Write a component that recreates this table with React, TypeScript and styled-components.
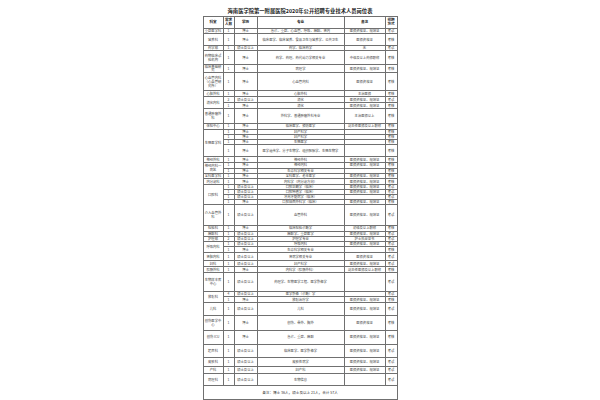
import styled, { createGlobalStyle } from "styled-components";

type Sub = {
     n: string;
     edu: string;
     major: string;
     note: string;
     method: string;
     h: number;
};

type Group = {
     dept: string;
     subs: Sub[];
};

const GlobalStyle = createGlobalStyle`
     html, body {
          margin: 0;
          padding: 0;
          background: #ffffff;
     }
     body {
          font-family: "Noto Sans CJK SC", "Noto Sans", sans-serif;
          color: #222;
     }
`;

const Page = styled.div`
     width: 600px;
     height: 400px;
     display: flex;
     flex-direction: column;
     align-items: center;
     padding-top: 7px;
     box-sizing: border-box;
     overflow: hidden;
`;

const Title = styled.h1`
     margin: 0;
     height: 8.5px;
     font-size: 5.3px;
     line-height: 8.5px;
     font-weight: 700;
     color: #222;
     white-space: nowrap;
`;

const Table = styled.table`
     width: 194px;
     border-collapse: collapse;
     table-layout: fixed;
     font-size: 3.3px;
     line-height: 1.12;
`;

const Row = styled.tr<{ $h: number }>`
     height: ${(p) => p.$h}px;
`;

const Cell = styled.td`
     border: 1px solid #707070;
     padding: 0 0.4px;
     text-align: center;
     vertical-align: middle;
     color: #444;
     overflow: hidden;
     word-break: break-all;
`;

const HeadCell = styled.th`
     border: 1px solid #707070;
     padding: 0;
     font-size: 3.6px;
     line-height: 1.15;
     font-weight: 700;
     color: #222;
     vertical-align: middle;
`;

const FootCell = styled.td`
     border: 1px solid #707070;
     text-align: center;
     vertical-align: middle;
     font-size: 3.6px;
     color: #333;
`;

const groups: Group[] = [
     { dept: "重症医学科", subs: [{ n: "1", edu: "博士", major: "急诊、重症、心血管、呼吸、麻醉、肾内", note: "医师资格证、规培证", method: "考试", h: 5.7 }] },
     { dept: "营养科", subs: [{ n: "1", edu: "博士", major: "临床医学、临床营养、食品卫生与营养学、公共卫生", note: "医师资格证", method: "考核", h: 11.5 }] },
     { dept: "药学部", subs: [{ n: "1", edu: "硕士及以上", major: "药学、临床药学", note: "无", method: "考试", h: 5.7 }] },
     { dept: "药物临床试验机构", subs: [{ n: "1", edu: "博士", major: "药学、药理、药代动力学相关专业", note: "中级及以上药师职称", method: "考核", h: 13.3 }] },
     { dept: "临床基础研究", subs: [{ n: "1", edu: "博士", major: "病理学", note: "医师资格证、规培证", method: "考核", h: 5 }] },
     { dept: "心血管内科（心血管研究所）", subs: [{ n: "1", edu: "博士", major: "心血管内科", note: "医师资格证", method: "考核", h: 18.3 }] },
     { dept: "心脏外科", subs: [{ n: "1", edu: "博士", major: "心脏外科", note: "主治医师", method: "考核", h: 6 }] },
     {
          dept: "消化内科",
          subs: [
               { n: "2", edu: "硕士及以上", major: "消化", note: "医师资格证、规培证", method: "考试", h: 5.7 },
               { n: "1", edu: "博士", major: "消化", note: "医师资格证、规培证", method: "考核", h: 6 },
          ],
     },
     { dept: "普通肿瘤外科", subs: [{ n: "1", edu: "博士", major: "外科学、普通肿瘤外科专业", note: "主治医师以上", method: "考核", h: 14.6 }] },
     { dept: "体检中心", subs: [{ n: "1", edu: "博士", major: "临床医学、预防医学", note: "副主任医师及以上职称", method: "考核", h: 6 }] },
     {
          dept: "生殖医学科",
          subs: [
               { n: "1", edu: "博士", major: "妇产科学", note: "", method: "考核", h: 5.2 },
               { n: "1", edu: "博士", major: "妇产科学", note: "", method: "考核", h: 5 },
               { n: "1", edu: "博士", major: "生殖医学", note: "", method: "考核", h: 5.5 },
               { n: "1", edu: "博士", major: "医学遗传学、分子生物学、组织胚胎学、生殖生物学", note: "", method: "考核", h: 12 },
          ],
     },
     { dept: "神经外科", subs: [{ n: "1", edu: "博士", major: "神经外科", note: "医师资格证、规培证", method: "考核", h: 5.7 }] },
     {
          dept: "神经内科一病区",
          subs: [
               { n: "1", edu: "博士", major: "神经内科", note: "医师资格证、规培证", method: "考核", h: 5.5 },
               { n: "1", edu: "博士", major: "生命科学相关专业", note: "", method: "考核", h: 5.5 },
          ],
     },
     { dept: "全科医学科", subs: [{ n: "1", edu: "博士", major: "全科医学、老年医学", note: "医师资格证、规培证", method: "考核", h: 5.3 }] },
     { dept: "内分泌科", subs: [{ n: "1", edu: "博士", major: "内科学（内分泌方向）", note: "医师资格证、规培证", method: "考核", h: 5.5 }] },
     {
          dept: "口腔科",
          subs: [
               { n: "1", edu: "硕士及以上", major: "口腔正畸学（临床）", note: "医师资格证、规培证", method: "考试", h: 5.1 },
               { n: "1", edu: "硕士及以上", major: "口腔种植学（临床）", note: "医师资格证、规培证", method: "考试", h: 5.1 },
               { n: "1", edu: "硕士及以上", major: "牙周牙髓病学（临床）", note: "", method: "考试", h: 5.1 },
               { n: "1", edu: "博士", major: "口腔颌面外科学（临床）", note: "医师资格证、规培证", method: "考核", h: 5.2 },
          ],
     },
     { dept: "介入血管外科", subs: [{ n: "1", edu: "硕士及以上", major: "血管外科", note: "医师资格证、规培证", method: "考试", h: 20.5 }] },
     { dept: "检验科", subs: [{ n: "1", edu: "博士", major: "临床检验诊断学", note: "初级及以上职称", method: "考核", h: 5.8 }] },
     { dept: "麻醉科", subs: [{ n: "1", edu: "硕士及以上", major: "麻醉学、重症医学", note: "医师资格证、规培证", method: "考试", h: 5.7 }] },
     { dept: "护理部", subs: [{ n: "2", edu: "硕士及以上", major: "护理学专业", note: "护士执业证书", method: "考试", h: 5 }] },
     {
          dept: "呼吸内科",
          subs: [
               { n: "1", edu: "硕士及以上", major: "呼吸内科", note: "医师资格证、规培证", method: "考试", h: 5 },
               { n: "1", edu: "博士", major: "生命科学相关专业", note: "", method: "考核", h: 5.7 },
          ],
     },
     { dept: "肾脏内科", subs: [{ n: "1", edu: "硕士及以上", major: "肾病学相关专业", note: "医师资格证", method: "考试", h: 8.3 }] },
     { dept: "妇科", subs: [{ n: "1", edu: "硕士及以上", major: "妇产科学", note: "医师资格证、规培证", method: "考试", h: 6 }] },
     { dept: "肛肠外科", subs: [{ n: "1", edu: "博士", major: "内科学（肛肠外科）", note: "副主任医师及以上职称", method: "考核", h: 5.5 }] },
     { dept: "生物样本库中心", subs: [{ n: "1", edu: "硕士及以上", major: "药理学、生物医学工程、医学影像学", note: "", method: "考试", h: 19.5 }] },
     {
          dept: "放射科",
          subs: [
               { n: "4", edu: "硕士及以上", major: "医学影像（诊断）学", note: "", method: "考试", h: 5 },
               { n: "1", edu: "博士", major: "放射治疗学", note: "医师资格证、规培证", method: "考核", h: 5.7 },
          ],
     },
     { dept: "儿科", subs: [{ n: "1", edu: "硕士及以上", major: "儿科", note: "医师资格证、规培证", method: "考试", h: 12.6 }] },
     { dept: "创伤医学中心", subs: [{ n: "1", edu: "博士", major: "创伤、骨外、胸外", note: "医师资格证", method: "考核", h: 15 }] },
     { dept: "创伤 ICU", subs: [{ n: "1", edu: "博士", major: "急诊、重症、麻醉", note: "医师资格证、规培证", method: "考核", h: 14 }] },
     { dept: "超声科", subs: [{ n: "1", edu: "硕士及以上", major: "临床医学、医学影像学", note: "医师资格证、规培证", method: "考试", h: 13.4 }] },
     { dept: "皮肤科", subs: [{ n: "1", edu: "硕士及以上", major: "皮肤性病学", note: "医师资格证、规培证", method: "考试", h: 9 }] },
     { dept: "产科", subs: [{ n: "1", edu: "硕士及以上", major: "妇产科", note: "医师资格证、规培证", method: "考试", h: 7 }] },
     { dept: "病理科", subs: [{ n: "1", edu: "硕士及以上", major: "生物信息", note: "", method: "考试", h: 12.4 }] },
];

function App() {
     return (
          <Page>
               <GlobalStyle />
               <Title>海南医学院第一附属医院2020年公开招聘专业技术人员岗位表</Title>
               <Table>
                    <colgroup>
                         <col style={{ width: "20px" }} />
                         <col style={{ width: "11px" }} />
                         <col style={{ width: "23px" }} />
                         <col style={{ width: "87px" }} />
                         <col style={{ width: "41px" }} />
                         <col style={{ width: "12px" }} />
                    </colgroup>
                    <thead>
                         <Row $h={12}>
                              <HeadCell>科室</HeadCell>
                              <HeadCell>需求<br />人数</HeadCell>
                              <HeadCell>学历</HeadCell>
                              <HeadCell>专业</HeadCell>
                              <HeadCell>备注</HeadCell>
                              <HeadCell>招聘<br />方式</HeadCell>
                         </Row>
                    </thead>
                    <tbody>
                         {groups.map((g) =>
                              g.subs.map((s, i) => (
                                   <Row key={g.dept + i} $h={s.h}>
                                        {i === 0 && <Cell rowSpan={g.subs.length}>{g.dept}</Cell>}
                                        <Cell>{s.n}</Cell>
                                        <Cell>{s.edu}</Cell>
                                        <Cell>{s.major}</Cell>
                                        <Cell>{s.note}</Cell>
                                        <Cell>{s.method}</Cell>
                                   </Row>
                              ))
                         )}
                         <Row $h={13.6}>
                              <FootCell colSpan={6}>备注：博士 36人，硕士及以上 21人，合计 57人</FootCell>
                         </Row>
                    </tbody>
               </Table>
          </Page>
     );
}

export default App;
